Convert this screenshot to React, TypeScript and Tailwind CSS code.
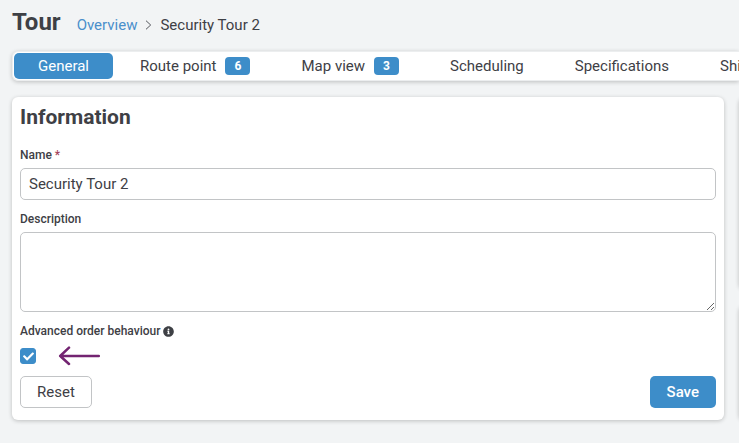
import React, { useState } from "react";
import { FaCheck, FaInfoCircle } from "react-icons/fa";

interface Tab {
  label: string;
  count?: number;
}

const tabs: Tab[] = [
  { label: "General" },
  { label: "Route point", count: 6 },
  { label: "Map view", count: 3 },
  { label: "Scheduling" },
  { label: "Specifications" },
  { label: "Shifts" },
];

const App: React.FC = () => {
  const [activeTab, setActiveTab] = useState<string>("General");
  const [name, setName] = useState<string>("Security Tour 2");
  const [description, setDescription] = useState<string>("");
  const [advanced, setAdvanced] = useState<boolean>(true);

  const handleReset = () => {
    setName("Security Tour 2");
    setDescription("");
    setAdvanced(true);
  };

  return (
    <div className="min-h-screen overflow-hidden bg-[#f2f4f5] pl-3 font-[Roboto,sans-serif] text-[15px] text-[#3e4045]">
      <header className="flex items-baseline gap-4 pt-1">
        <h1 className="text-2xl leading-9 font-bold">Tour</h1>
        <nav className="flex items-center gap-2">
          <a href="#overview" className="text-[#4a8fcb]">
            Overview
          </a>
          <svg viewBox="0 0 7 10" className="h-[10px] w-[7px]" fill="none" stroke="#55585d">
            <path d="M1 0.7 5.7 5 1 9.3" />
          </svg>
          <span>Security Tour 2</span>
        </nav>
      </header>

      <nav className="mt-[11px] flex gap-[3px] rounded-l-md border border-r-0 border-[#eceeef] bg-white p-px shadow-[0_1px_4px_rgba(0,0,0,0.22)]">
        {tabs.map((tab) => (
          <button
            key={tab.label}
            type="button"
            onClick={() => setActiveTab(tab.label)}
            className={`flex h-[26px] shrink-0 items-center gap-[9px] rounded-[5px] px-6 ${
              activeTab === tab.label ? "bg-[#3d8dc9] text-white" : "text-[#3e4045]"
            }`}
          >
            {tab.label}
            {tab.count !== undefined && (
              <span className="flex h-[18px] w-[25px] items-center justify-center rounded bg-[#3d8dc9] text-xs font-bold text-white">
                {tab.count}
              </span>
            )}
          </button>
        ))}
      </nav>

      <main className="mt-4 flex gap-[15px]">
        <form
          onSubmit={(e) => e.preventDefault()}
          className="min-w-0 flex-1 rounded-md bg-white px-2 pt-1 pb-3 shadow-[0_1px_4px_rgba(0,0,0,0.22)]"
        >
          <h2 className="text-[21px] leading-8 font-bold">Information</h2>

          <label htmlFor="name" className="mt-[14px] block text-xs leading-4 font-medium">
            Name <span className="text-[#a5445c]">*</span>
          </label>
          <input
            id="name"
            type="text"
            value={name}
            onChange={(e) => setName(e.target.value)}
            className="mt-[5px] block h-8 w-full rounded-[5px] border border-[#c2c4c6] bg-white px-2 outline-none"
          />

          <label htmlFor="description" className="mt-[11px] block text-xs leading-4 font-medium">
            Description
          </label>
          <textarea
            id="description"
            value={description}
            onChange={(e) => setDescription(e.target.value)}
            className="mt-[5px] block h-20 w-full resize rounded-[5px] border border-[#c2c4c6] bg-white px-2 py-1 outline-none"
          />

          <label htmlFor="advanced" className="mt-[11px] flex items-center gap-[3px] text-xs leading-4 font-medium">
            Advanced order behaviour
            <FaInfoCircle className="size-[11px]" />
          </label>
          <div className="mt-[7px] flex h-5 items-center gap-[22px]">
            <span className="grid size-4">
              <input
                id="advanced"
                type="checkbox"
                checked={advanced}
                onChange={(e) => setAdvanced(e.target.checked)}
                className="col-start-1 row-start-1 size-4 appearance-none rounded-[3px] border border-[#3d8dc9] checked:bg-[#3d8dc9]"
              />
              {advanced && (
                <FaCheck className="pointer-events-none col-start-1 row-start-1 size-[11px] place-self-center text-white" />
              )}
            </span>
            <svg
              viewBox="0 0 43 20"
              className="h-5 w-[43px]"
              fill="none"
              stroke="#732471"
              strokeWidth="2.5"
              strokeLinecap="round"
              strokeLinejoin="round"
            >
              <path d="M40.8 10H2.2M11 1.7 2.2 10 11 18" />
            </svg>
          </div>

          <div className="mt-[10px] flex justify-between">
            <button
              type="button"
              onClick={handleReset}
              className="h-8 rounded-[5px] border border-[#c2c4c6] bg-white px-4"
            >
              Reset
            </button>
            <button type="submit" className="h-8 rounded-[5px] bg-[#3d8dc9] px-[17px] font-medium text-white">
              Save
            </button>
          </div>
        </form>

        <aside className="flex w-0 shrink-0 flex-col gap-4">
          <div className="h-48 w-80 rounded-md bg-white shadow-[0_1px_4px_rgba(0,0,0,0.22)]" />
          <div className="w-80 flex-1 rounded-md bg-white shadow-[0_1px_4px_rgba(0,0,0,0.22)]" />
        </aside>
      </main>
    </div>
  );
};

export default App;
